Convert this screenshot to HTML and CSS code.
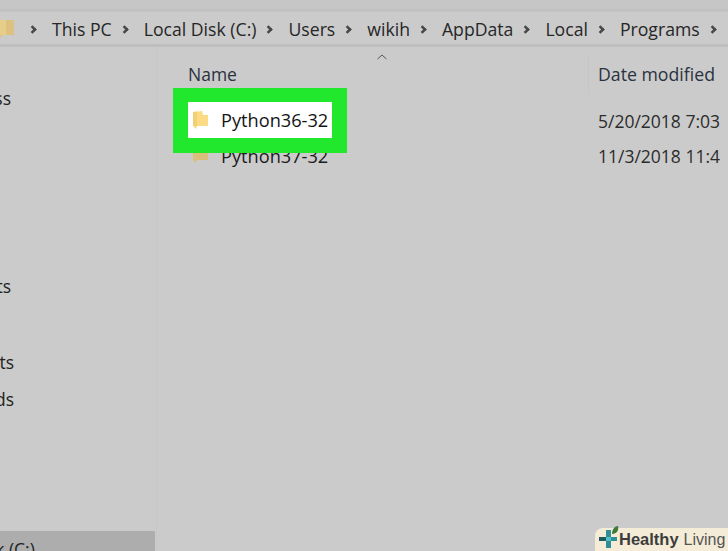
FILE: index.html
```
<!DOCTYPE html>
<html lang="en">
<head>
<meta charset="utf-8">
<title>Programs</title>
<link rel="stylesheet" href="styles.css">
</head>
<body>
<div class="window">
  <div class="topband"></div>
  <div class="address">
    <svg class="crumb-folder" viewBox="0 0 16 20" width="16" height="20"><path d="M0 1h15v15H3l-1 3-2-3z" fill="#dcc27e"/><path d="M0 1h7v15H0z" fill="#e6cd88"/></svg>
    <span class="sep"></span><span class="crumb">This PC</span>
    <span class="sep"></span><span class="crumb">Local Disk (C:)</span>
    <span class="sep"></span><span class="crumb">Users</span>
    <span class="sep"></span><span class="crumb">wikih</span>
    <span class="sep"></span><span class="crumb">AppData</span>
    <span class="sep"></span><span class="crumb">Local</span>
    <span class="sep"></span><span class="crumb">Programs</span>
    <span class="sep"></span>
  </div>
  <div class="content">
    <aside class="sidebar">
      <div class="nav nav-a"><span>Quick access</span></div>
      <div class="nav nav-b"><span>Documents</span></div>
      <div class="nav nav-c"><span>Documents</span></div>
      <div class="nav nav-d"><span>Downloads</span></div>
      <div class="nav nav-e"><span>Local Disk (C:)</span></div>
    </aside>
    <main class="files">
      <div class="sort-caret"><svg viewBox="0 0 10 6" width="10" height="6"><path d="M.5 5 5 1l4.500 4" fill="none" stroke="#555" stroke-width="1"/></svg></div>
      <div class="head">
        <div class="col-name">Name</div>
        <div class="col-date">Date modified</div>
      </div>
      <div class="row row-first">
        <div class="col-name"></div>
        <div class="col-date">5/20/2018 7:03</div>
      </div>
      <div class="row">
        <div class="col-name name-cell">
          <svg class="folder" viewBox="0 0 15 18" width="15" height="18"><path d="M0 1 9 0l1 3h5v12H4l-1 3-2-2-1-1z" fill="#d9bf79"/></svg>
          <span>Python37-32</span>
        </div>
        <div class="col-date">11/3/2018 11:4</div>
      </div>
      <div class="highlight">
        <div class="selected">
          <svg class="folder" viewBox="0 0 15 18" width="15" height="18"><path d="M0 1 9 0l1 4h5v11H4l-1 3-2-2-1-1z" fill="#fbdc84"/><path d="M0 1 4 .5V15H0z" fill="#f4d074"/></svg>
          <span>Python36-32</span>
        </div>
      </div>
    </main>
  </div>
  <div class="badge">
    <svg class="badge-logo" viewBox="0 0 22 24" width="22" height="24">
      <path d="M1 12h9v4H1z" fill="#1f5a60"/>
      <path d="M8 5h5v7h6v4h-6v7H8z" fill="#2f8f98"/>
      <path d="M8 12h5v4H8z" fill="#4fc2c4"/>
      <path d="M14 9c0-5 3-8 6-8 1 4-1 8-6 8z" fill="#3f7a3a"/>
    </svg>
    <span class="badge-a">Healthy</span><span class="badge-b">Living</span>
  </div>
</div>
</body>
</html>
```
FILE: styles.css
```
* { box-sizing: border-box; }
html, body { margin: 0; padding: 0; }
body { width: 728px; height: 551px; overflow: hidden; background: #cbcbcb; }
.window {
  position: relative;
  width: 728px;
  height: 551px;
  overflow: hidden;
  display: flex;
  flex-direction: column;
  font-family: "Open Sans", "Noto Sans", sans-serif;
  font-size: 17.500px;
  color: #1c1c1c;
  background: #cbcbcb;
}
.topband { height: 11px; flex: none; background: #c6c6c6; border-bottom: 2px solid #c0c0c0; }
.address {
  flex: none;
  height: 36px;
  display: flex;
  align-items: center;
  border-bottom: 3px solid #bfbfbf;
  border-top: 1px solid #c4c4c4;
  white-space: nowrap;
  color: #262626;
  padding-top: 2px;
  font-size: 17.650px;
}
.crumb-folder { margin-left: -1px; margin-right: 5px; flex: none; }
.crumb { display: block; line-height: 24px; }
.sep {
  flex: none;
  width: 7px;
  height: 7px;
  margin: 0 16px 0 9px;
  border-top: 3px solid #474747;
  border-right: 3px solid #474747;
  transform: rotate(45deg) scale(.85);
}
.content { flex: 1; display: flex; min-height: 0; }
.sidebar {
  width: 157px;
  flex: none;
  position: relative;
  display: flex;
  flex-direction: column;
  border-right: 1px solid #c7c7c7;
  color: #222;
}
.nav { display: flex; justify-content: flex-end; overflow: hidden; white-space: nowrap; line-height: 24px; }
.nav-a { width: 11px; margin-top: 39px; }
.nav-b { width: 11px; margin-top: 164px; }
.nav-c { width: 14px; margin-top: 52px; }
.nav-d { width: 14px; margin-top: 13px; }
.nav-e {
  margin-top: auto;
  width: 155px;
  height: 20px;
  background: #adadad;
  justify-content: flex-start;
  text-indent: -77px;
  line-height: 37px;
}
.files { flex: 1; position: relative; min-width: 0; }
.sort-caret { height: 0; padding-left: 220px; line-height: 0; position: relative; top: 6px; }
.head { display: flex; margin-top: 7px; height: 55px; color: #2a3240; line-height: 24px; }
.col-name { width: 431px; flex: none; padding-left: 31px; }
.col-date { padding-left: 10px; white-space: nowrap; flex: none; color: #2c2c2c; }
.head .col-date { border-left: 1px solid #c6c6c6; height: 40px; padding-left: 9px; padding-top: 8px; color: #2a3240; font-size: 17.700px; }
.head .col-name { padding-top: 8px; }
.row { display: flex; height: 33px; line-height: 24px; }
.row-first { height: 35px; }
.name-cell { display: flex; align-items: flex-start; gap: 13px; padding-left: 36px; font-size: 18.200px; }
.folder { flex: none; margin-top: 1px; }
.highlight {
  position: absolute;
  left: 16px;
  top: 41px;
  width: 174px;
  height: 65px;
  padding: 14px 15px 15px;
  background: #22e82d;
}
.selected {
  height: 36px;
  background: #fff;
  display: flex;
  align-items: center;
  gap: 13px;
  padding-left: 5px;
  color: #151515;
  white-space: nowrap;
  font-size: 18.200px;
}
.selected .folder { margin-top: 0; }
.badge {
  position: absolute;
  right: 0;
  bottom: 0;
  width: 133px;
  height: 23px;
  padding-left: 3px;
  background: #f4ecd6;
  border-radius: 8px 0 0 0;
  display: flex;
  align-items: center;
  font-family: "Liberation Sans", sans-serif;
  font-size: 16.500px;
  white-space: nowrap;
  color: #3d3d3d;
}
.badge-logo { flex: none; margin-right: -1px; margin-top: -6px; }
.badge-a { font-weight: 700; margin-right: 5px; }
.badge-b { color: #555; font-size: 16px; }
```
